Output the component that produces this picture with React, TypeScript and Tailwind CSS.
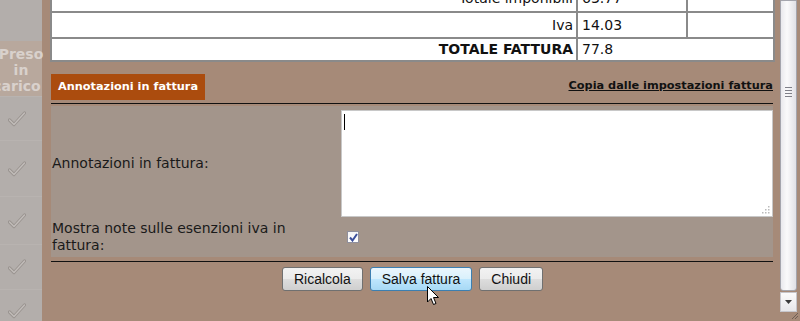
import React from "react";

const checkRows = [44, 56, 48, 45, 43];

const Check: React.FC = () => (
  <svg width="18" height="16" viewBox="0 0 18 16" fill="none">
    <path d="M1.5 9 L6 13.5 L16.5 2" stroke="#99938f" strokeWidth="3.2" strokeLinecap="round" strokeLinejoin="round" />
    <path d="M1.5 9 L6 13.5 L16.5 2" stroke="#c2bdba" strokeWidth="1.4" strokeLinecap="round" strokeLinejoin="round" />
  </svg>
);

const LeftStrip: React.FC = () => (
  <div className="w-[42px] shrink-0 bg-[#b3aeab] flex flex-col">
    <div className="h-[41px] shrink-0" />
    <div className="h-[55px] shrink-0 bg-[#b8a89d] flex flex-col items-center justify-center pt-[2px] text-[#d9d1cc] font-bold text-[14px] leading-[16px] text-center font-['DejaVu_Sans',sans-serif]">
      <span>Preso</span>
      <span>in</span>
      <span className="-ml-[8px]">carico</span>
    </div>
    {checkRows.map((h, i) => (
      <div key={i} style={{ height: h }} className="shrink-0 border-t border-[#b8b3b0] flex items-center pl-[8px]">
        <Check />
      </div>
    ))}
  </div>
);

const btnBase =
  "h-[24px] rounded-[3px] border px-[11px] text-[14px] text-[#111] font-['Liberation_Sans',Arial,sans-serif] leading-none";

const Scrollbar: React.FC = () => (
  <div className="w-[17px] ml-[5px] shrink-0 flex flex-col h-[321px]">
    <div className="h-[291px] rounded-b-[3px] border border-[#a4a5ad] bg-[linear-gradient(to_right,#e9e9ed,#fafafb_40%,#e0e0e5)] flex items-start justify-center pt-[86px]">
      <div className="flex flex-col gap-[2px]">
        <div className="w-[7px] h-[1px] bg-[#7f8088]" />
        <div className="w-[7px] h-[1px] bg-[#7f8088]" />
        <div className="w-[7px] h-[1px] bg-[#7f8088]" />
        <div className="w-[7px] h-[1px] bg-[#7f8088]" />
      </div>
    </div>
    <div className="h-[20px] mt-[1px] border border-[#c6c6cc] bg-[linear-gradient(to_bottom,#fbfbfc,#e7e7ea)] flex items-center justify-center">
      <svg width="7" height="4" viewBox="0 0 7 4">
        <path d="M0 0 H7 L3.5 4 Z" fill="#3a3a3a" />
      </svg>
    </div>
  </div>
);

export default function App() {
  return (
    <div className="w-[800px] h-[321px] overflow-hidden flex bg-[#a68a78] relative font-['DejaVu_Sans',Verdana,sans-serif]">
      <LeftStrip />
      <div className="w-[725px] ml-[8px] shrink-0 flex flex-col">
        <table className="-mt-[16px] w-[725px] border-collapse bg-white border-2 border-[#7d7d7d] text-[14px] text-[#111]">
          <tbody>
            <tr className="h-[27px]">
              <td className="border-2 border-[#8a8a8a] text-right pr-[3px] w-[526px]">Totale imponibili</td>
              <td className="border-2 border-[#8a8a8a] pl-[4px] w-[110px]">63.77</td>
              <td className="border-2 border-[#8a8a8a]" />
            </tr>
            <tr className="h-[26px]">
              <td className="border-2 border-[#8a8a8a] text-right pr-[3px]">Iva</td>
              <td className="border-2 border-[#8a8a8a] pl-[4px]">14.03</td>
              <td className="border-2 border-[#8a8a8a]" />
            </tr>
            <tr className="h-[23px]">
              <td className="border-2 border-[#8a8a8a] text-right pr-[3px] font-bold">TOTALE FATTURA</td>
              <td colSpan={2} className="border-2 border-[#8a8a8a] pl-[4px]">77.8</td>
            </tr>
          </tbody>
        </table>

        <div className="mt-[12px] flex items-end justify-between pl-[1px] pr-[2px]">
          <div className="h-[26px] w-[154px] bg-[#ab4c0e] text-white font-bold text-[11.3px] flex items-center justify-center">
            Annotazioni in fattura
          </div>
          <span className="font-bold text-[11.3px] text-[#111] underline mb-[5px]">Copia dalle impostazioni fattura</span>
        </div>
        <div className="mt-[3px] ml-[1px] mr-[2px] h-[1px] bg-[#111]" />

        <div className="mt-[2px] ml-[1px] mr-[2px] bg-[#a3958b] text-[14px] text-[#1a1a1a] flex flex-col pt-[4px] pb-[3px]">
          <div className="flex items-center">
            <div className="w-[290px] pl-[1px]">Annotazioni in fattura:</div>
            <div className="flex-1 h-[107px] bg-white border border-[#c8c8c8] relative">
              <div className="absolute left-[2px] top-[3px] w-[1px] h-[16px] bg-black" />
              <svg className="absolute right-[2px] bottom-[2px]" width="8" height="8" viewBox="0 0 8 8">
                <rect x="6" y="0" width="1.5" height="1.5" fill="#bbb" />
                <rect x="3" y="3" width="1.5" height="1.5" fill="#bbb" />
                <rect x="6" y="3" width="1.5" height="1.5" fill="#bbb" />
                <rect x="0" y="6" width="1.5" height="1.5" fill="#bbb" />
                <rect x="3" y="6" width="1.5" height="1.5" fill="#bbb" />
                <rect x="6" y="6" width="1.5" height="1.5" fill="#bbb" />
              </svg>
            </div>
          </div>
          <div className="flex items-center mt-[3px]">
            <div className="w-[290px] pl-[1px] pr-[12px] leading-[17px]">Mostra note sulle esenzioni iva in fattura:</div>
            <div className="pl-[6px]">
              <div className="w-[12px] h-[12px] border border-[#8f8f9d] bg-[linear-gradient(to_bottom,#f4f4f6,#ffffff)] flex items-center justify-center">
                <svg width="9" height="9" viewBox="0 0 9 9">
                  <path d="M1 4.5 L3.5 7.5 L8 1" stroke="#3b4f9c" strokeWidth="2" fill="none" />
                </svg>
              </div>
            </div>
          </div>
        </div>
        <div className="mt-[4px] ml-[1px] mr-[2px] h-[1px] bg-[#111]" />

        <div className="mt-[5px] flex justify-center gap-[7px]">
          <button className={`${btnBase} border-[#707070] bg-[linear-gradient(to_bottom,#f2f2f2_0%,#ebebeb_50%,#dddddd_51%,#cfcfcf_100%)]`}>Ricalcola</button>
          <button className={`${btnBase} border-[#3c7fb1] bg-[linear-gradient(to_bottom,#eaf6fd_0%,#d9f0fc_50%,#bee6fd_51%,#a7d9f5_100%)]`}>Salva fattura</button>
          <button className={`${btnBase} border-[#707070] bg-[linear-gradient(to_bottom,#f2f2f2_0%,#ebebeb_50%,#dddddd_51%,#cfcfcf_100%)]`}>Chiudi</button>
        </div>
      </div>
      <Scrollbar />

      <svg className="absolute left-[427px] top-[286px]" width="13" height="20" viewBox="0 0 13 20">
        <path d="M0.5 0.5 V16 L4 12.5 L6.5 18.5 L9 17.5 L6.5 11.5 H11.5 Z" fill="#fff" stroke="#000" strokeWidth="1" strokeLinejoin="round" />
      </svg>
      <svg className="absolute right-[1px] bottom-[1px]" width="9" height="9" viewBox="0 0 9 9">
        <path d="M8 2 L2 8 M8 5 L5 8" stroke="#6f5f55" strokeWidth="1" />
      </svg>
    </div>
  );
}
